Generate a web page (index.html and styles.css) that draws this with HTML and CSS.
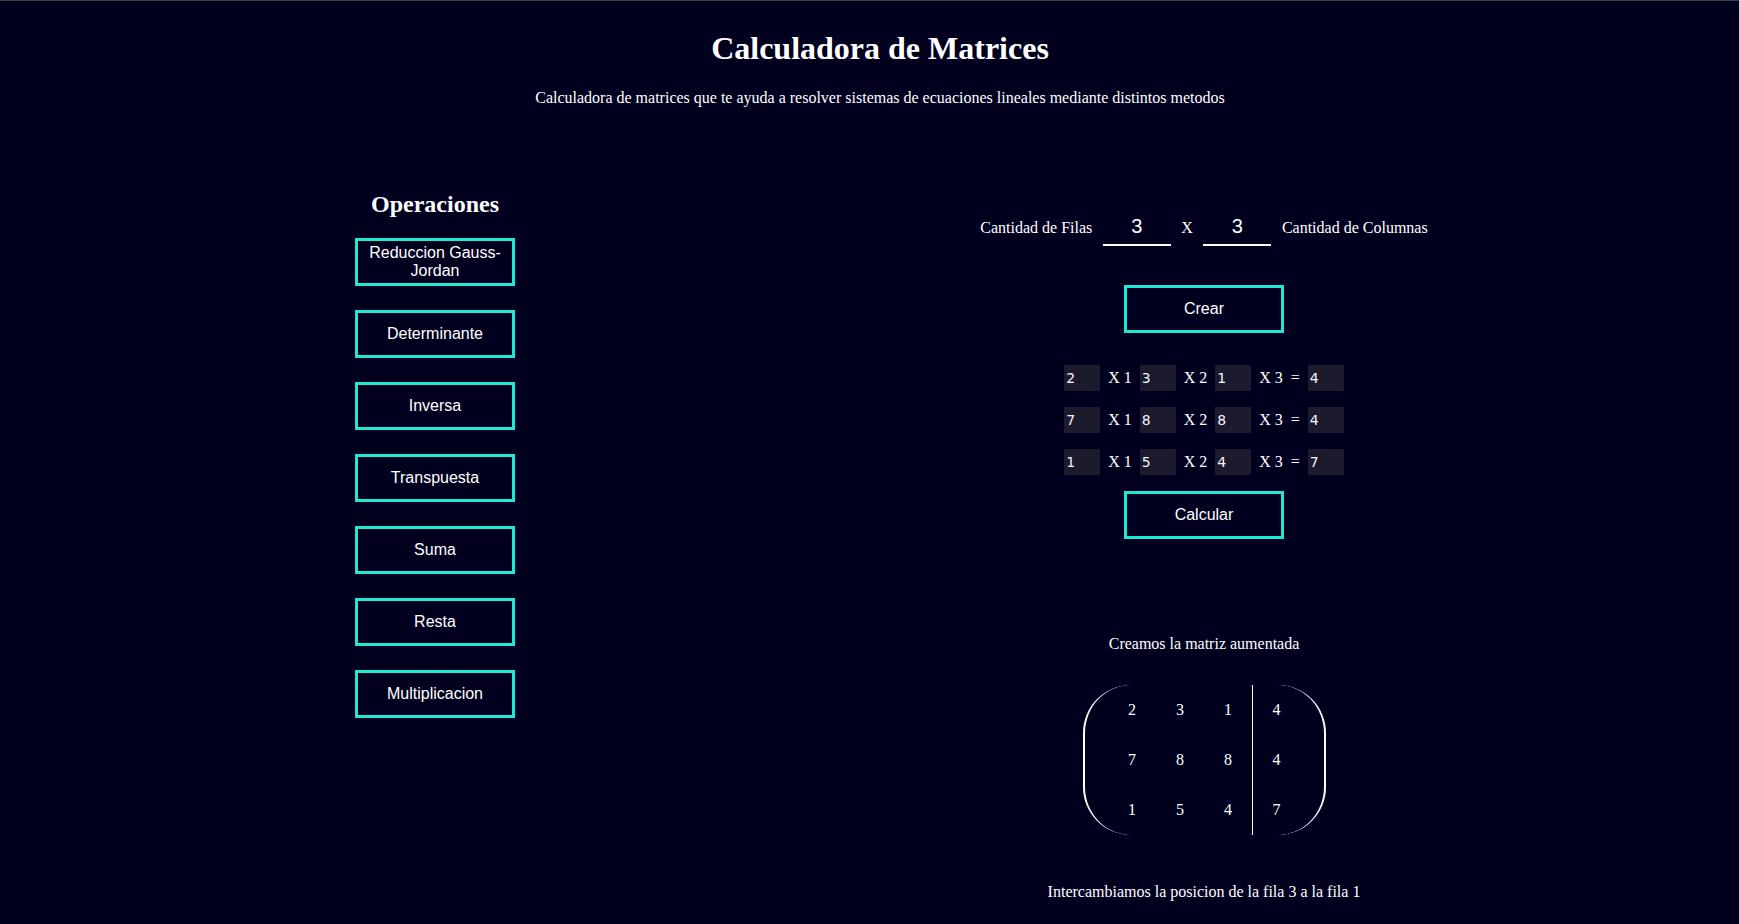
FILE: index.html
```html
<!DOCTYPE html>
<html lang="es">
<head>
<meta charset="utf-8">
<title>Calculadora de Matrices</title>
<link rel="stylesheet" href="styles.css">
</head>
<body>
<div class="page">
  <header class="hero">
    <h1 class="title">Calculadora de Matrices</h1>
    <p class="subtitle">Calculadora de matrices que te ayuda a resolver sistemas de ecuaciones lineales mediante distintos metodos</p>
  </header>
  <main class="layout">
    <aside class="ops">
      <h2 class="ops-title">Operaciones</h2>
      <div class="op-list">
        <button class="btn">Reduccion Gauss-Jordan</button>
        <button class="btn">Determinante</button>
        <button class="btn">Inversa</button>
        <button class="btn">Transpuesta</button>
        <button class="btn">Suma</button>
        <button class="btn">Resta</button>
        <button class="btn">Multiplicacion</button>
      </div>
    </aside>
    <section class="work">
      <div class="dims">
        <span class="dim-label">Cantidad de Filas</span>
        <input class="dim-input" type="text" value="3">
        <span class="dim-x">X</span>
        <input class="dim-input" type="text" value="3">
        <span class="dim-label">Cantidad de Columnas</span>
      </div>
      <button class="btn btn-create">Crear</button>
      <div class="eqs">
        <div class="eq-row">
          <input class="coef" type="text" value="2"><span class="var">X 1</span>
          <input class="coef" type="text" value="3"><span class="var">X 2</span>
          <input class="coef" type="text" value="1"><span class="var">X 3</span><span class="eq-sign">=</span>
          <input class="coef" type="text" value="4">
        </div>
        <div class="eq-row">
          <input class="coef" type="text" value="7"><span class="var">X 1</span>
          <input class="coef" type="text" value="8"><span class="var">X 2</span>
          <input class="coef" type="text" value="8"><span class="var">X 3</span><span class="eq-sign">=</span>
          <input class="coef" type="text" value="4">
        </div>
        <div class="eq-row">
          <input class="coef" type="text" value="1"><span class="var">X 1</span>
          <input class="coef" type="text" value="5"><span class="var">X 2</span>
          <input class="coef" type="text" value="4"><span class="var">X 3</span><span class="eq-sign">=</span>
          <input class="coef" type="text" value="7">
        </div>
      </div>
      <button class="btn btn-calc">Calcular</button>
      <p class="step step-first">Creamos la matriz aumentada</p>
      <div class="matrix">
        <span class="cell">2</span><span class="cell">3</span><span class="cell">1</span><span class="cell cell-aug">4</span>
        <span class="cell">7</span><span class="cell">8</span><span class="cell">8</span><span class="cell cell-aug">4</span>
        <span class="cell">1</span><span class="cell">5</span><span class="cell">4</span><span class="cell cell-aug">7</span>
      </div>
      <p class="step step-next">Intercambiamos la posicion de la fila 3 a la fila 1</p>
    </section>
  </main>
</div>
</body>
</html>
```
FILE: styles.css
```css
html, body {
  margin: 0;
  padding: 0;
  background: #00001e;
}

body {
  color: #ffffff;
  font-family: "Liberation Serif", "Times New Roman", serif;
  font-size: 16px;
  overflow: hidden;
}

.page {
  border-top: 1px solid #3c3c3c;
  min-height: 923px;
}

.hero {
  text-align: center;
  padding-left: 21px;
}

.title {
  margin: 29px 0 0;
  font-size: 32px;
  font-weight: bold;
}

.subtitle {
  margin: 21.8px 0 0;
  font-size: 16px;
}

.layout {
  display: flex;
  align-items: flex-start;
}

.ops {
  width: 870px;
  padding-top: 84px;
  display: flex;
  flex-direction: column;
  align-items: center;
}

.ops-title {
  margin: 0 0 20px;
  font-size: 24px;
  font-weight: bold;
}

.op-list {
  display: flex;
  flex-direction: column;
  gap: 24px;
}

.btn {
  box-sizing: border-box;
  width: 160px;
  height: 48px;
  padding: 0 6px;
  border: 3px solid #1de9d5;
  background: transparent;
  color: #ffffff;
  font-family: "Liberation Sans", Arial, sans-serif;
  font-size: 16px;
  line-height: 18px;
  text-align: center;
}

.work {
  width: 668px;
  padding-top: 107px;
  display: flex;
  flex-direction: column;
  align-items: center;
}

.dims {
  display: flex;
  align-items: baseline;
  gap: 10.5px;
}

.dim-input {
  box-sizing: border-box;
  width: 68px;
  height: 32px;
  padding: 0 0 5.2px;
  border: none;
  border-bottom: 2px solid #ffffff;
  background: transparent;
  color: #ffffff;
  font-family: "Liberation Sans", Arial, sans-serif;
  font-size: 20px;
  text-align: center;
  outline: none;
}

.btn-create {
  margin-top: 39px;
}

.eqs {
  margin-top: 32.5px;
  display: flex;
  flex-direction: column;
  gap: 16px;
}

.eq-row {
  display: flex;
  align-items: center;
}

.coef {
  box-sizing: border-box;
  width: 36px;
  height: 26px;
  padding: 0 0 0 2px;
  border: none;
  background: #1b1b2d;
  color: #f2f4ff;
  font-family: "DejaVu Sans", sans-serif;
  font-size: 14px;
  outline: none;
}

.var {
  margin: 0 8px;
  white-space: pre;
}

.eq-sign {
  margin-right: 8px;
}

.btn-calc {
  margin-top: 16px;
}

.step {
  margin: 0;
  font-size: 16px;
}

.step-first {
  margin-top: 95.5px;
}

.matrix {
  margin-top: 32.6px;
  display: grid;
  grid-template-columns: repeat(4, 48px);
  grid-template-rows: repeat(3, 50px);
  padding: 0 23.5px;
  border-left: 2px solid #ffffff;
  border-right: 2px solid #ffffff;
  border-radius: 48px;
}

.cell {
  display: flex;
  align-items: center;
  justify-content: center;
}

.cell-aug {
  border-left: 1px solid #ffffff;
}

.step-next {
  margin-top: 47.5px;
}
```
